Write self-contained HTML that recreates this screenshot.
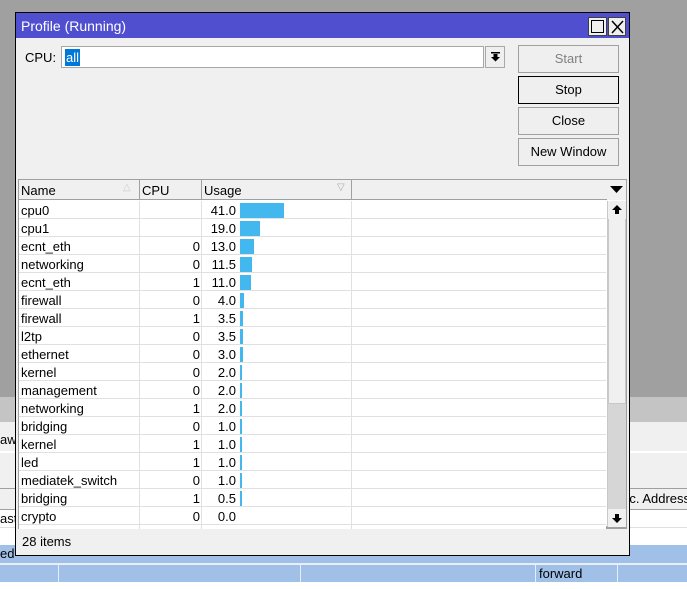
<!DOCTYPE html>
<html><head><style>
*{margin:0;padding:0;box-sizing:border-box}
body{width:687px;height:589px;position:relative;overflow:hidden;background:#fff;font-family:"Liberation Sans",Arial,sans-serif;font-size:13px;color:#000}
.a{position:absolute;white-space:nowrap}
.btn{position:absolute;left:518px;width:101px;height:28px;border:1px solid #a0a0a0;background:#efefef;text-align:center;line-height:26px;font-size:13px}
.r{position:absolute;left:19px;width:587px;height:18px;border-bottom:1px solid #e0e0e0;background:#fff}
.r span{position:absolute;top:2px}
.n{left:2px}.c{left:121px;width:60px;text-align:right}.u{left:183px;width:34px;text-align:right}
.b{position:absolute;left:221px;top:2px;height:15px;background:#42b8ee}
.vl{position:absolute;top:0;height:18px;width:1px;background:#e0e0e0}
</style></head><body>
<div class="a" style="left:0;top:0;width:687px;height:397px;background:#a0a0a0"></div>
<div class="a" style="left:0;top:397px;width:687px;height:25px;background:#c4c4c4"></div>
<div class="a" style="left:0;top:422px;width:687px;height:30px;background:#f0f0f0;border-bottom:1px solid #fff"></div>
<div class="a" style="left:0;top:453px;width:687px;height:35px;background:#f0f0f0"></div>
<div class="a" style="left:0;top:488px;width:687px;height:22px;background:#f0f0f0;border-top:1px solid #a0a0a0;border-bottom:1px solid #a0a0a0"></div>
<div class="a" style="left:625px;top:491px;font-size:13px">rc. Address</div>
<div class="a" style="left:0;top:511px;font-size:13px">ast</div>
<div class="a" style="left:0;top:432px;font-size:13px">aw</div>
<div class="a" style="left:0;top:527px;width:687px;height:1px;background:#e0e0e0"></div>
<div class="a" style="left:0;top:545px;width:687px;height:37px;background:#a0c0e8"></div>
<div class="a" style="left:0;top:563px;width:687px;height:2px;background:#e8eef8"></div>
<div class="a" style="left:58px;top:565px;width:1px;height:17px;background:#e8eef8"></div>
<div class="a" style="left:300px;top:565px;width:1px;height:17px;background:#e8eef8"></div>
<div class="a" style="left:535px;top:565px;width:1px;height:17px;background:#e8eef8"></div>
<div class="a" style="left:617px;top:565px;width:1px;height:17px;background:#e8eef8"></div>
<div class="a" style="left:0;top:546px;font-size:13px">ed</div>
<div class="a" style="left:539px;top:566px;font-size:13px">forward</div>

<div class="a" style="left:15px;top:12px;width:615px;height:544px;background:#f0f0f0;border:1px solid #000"></div>
<div class="a" style="left:16px;top:13px;width:613px;height:25px;background:#4f4fcf;color:#fff;font-size:14px;padding:5px 5px">Profile (Running)</div>
<div class="a" style="left:588px;top:17px;width:19px;height:19px;background:#f0f0f0;border:1px solid #404040"><div class="a" style="left:2px;top:2px;width:13px;height:13px;border:1px solid #000"></div></div>
<div class="a" style="left:608px;top:17px;width:18px;height:19px;background:#f0f0f0;border:1px solid #404040"><svg class="a" style="left:2px;top:2px" width="13" height="14"><path d="M1 1L12 13M12 1L1 13" stroke="#000" stroke-width="1.5"/></svg></div>
<div class="a" style="left:25px;top:50px;font-size:13px">CPU:</div>
<div class="a" style="left:61px;top:46px;width:423px;height:22px;background:#fff;border:1px solid #a8a8a8"><span class="a" style="left:3px;top:2px;background:#0078d7;color:#fff;padding:1px 1px;font-size:13px;line-height:15px">all</span></div>
<div class="a" style="left:485px;top:46px;width:20px;height:22px;background:#efefef;border:1px solid #a8a8a8"><svg class="a" style="left:4px;top:5px" width="11" height="11"><rect x="1" y="0" width="9" height="1.5"/><path d="M3.5 2h4v3h2.5L5.5 9.5 1 5h2.5z"/></svg></div>
<div class="btn" style="top:45px;color:#808080">Start</div>
<div class="btn" style="top:76px;border-color:#000">Stop</div>
<div class="btn" style="top:107px">Close</div>
<div class="btn" style="top:138px">New Window</div>

<div class="a" style="left:18px;top:179px;width:609px;height:350px;border:1px solid #a0a0a0;background:#fff;border-bottom:3px solid #a0a0a0"></div>
<div class="a" style="left:19px;top:180px;width:588px;height:20px;background:#f0f0f0;border-bottom:1px solid #a0a0a0;font-size:13px">
<span class="a" style="left:2px;top:3px">Name</span><span class="a" style="left:104px;top:2px;color:#ccc;font-size:10px">△</span>
<div class="a" style="left:120px;top:0;width:1px;height:20px;background:#a0a0a0"></div>
<span class="a" style="left:123px;top:3px">CPU</span>
<div class="a" style="left:182px;top:0;width:1px;height:20px;background:#a0a0a0"></div>
<span class="a" style="left:185px;top:3px">Usage</span><span class="a" style="left:318px;top:2px;color:#aaa;font-size:10px">▽</span>
<div class="a" style="left:332px;top:0;width:1px;height:20px;background:#a0a0a0"></div>
</div>
<div class="a" style="left:607px;top:180px;width:19px;height:20px;background:#f0f0f0"><svg class="a" style="left:3px;top:6px" width="13" height="8"><path d="M0 0h13L6.5 7z"/></svg></div>
<div class="a" style="left:607px;top:201px;width:19px;height:326px;background:#d6d6d6;border-left:1px solid #c8c8c8"></div>
<div class="a" style="left:608px;top:201px;width:18px;height:203px;background:#f0f0f0;border:1px solid #c8c8c8"></div>
<div class="a" style="left:608px;top:201px;width:18px;height:18px;background:#f0f0f0"><svg class="a" style="left:4px;top:4px" width="10" height="10"><path d="M5 0L10 5H7v4H3V5H0z"/></svg></div>
<div class="a" style="left:608px;top:509px;width:18px;height:18px;background:#f0f0f0"><svg class="a" style="left:4px;top:4px" width="10" height="10"><path d="M5 10L10 5H7V1H3v4H0z"/></svg></div>

<div id="rows"></div>
<div class="a" style="left:19px;top:529px;width:607px;height:25px;background:#f0f0f0;font-size:13px;padding:5px 3px">28 items</div>
<script>
var d=[["cpu0","","41.0",44],["cpu1","","19.0",20],["ecnt_eth","0","13.0",14],["networking","0","11.5",12],["ecnt_eth","1","11.0",11],["firewall","0","4.0",4],["firewall","1","3.5",3],["l2tp","0","3.5",3],["ethernet","0","3.0",3],["kernel","0","2.0",2],["management","0","2.0",2],["networking","1","2.0",2],["bridging","0","1.0",2],["kernel","1","1.0",2],["led","1","1.0",2],["mediatek_switch","0","1.0",2],["bridging","1","0.5",2],["crypto","0","0.0",0],["","","",0]];
var h="";d.forEach(function(r,i){var t=201+i*18;var hh=i==18?8:18;h+='<div class="r" style="top:'+t+'px;height:'+hh+'px"><div class="vl" style="left:120px"></div><div class="vl" style="left:182px"></div><div class="vl" style="left:332px"></div><span class="n">'+r[0]+'</span><span class="c">'+r[1]+'</span><span class="u">'+r[2]+'</span>'+(r[3]?'<div class="b" style="width:'+r[3]+'px"></div>':'')+'</div>';});
document.getElementById("rows").innerHTML=h;
</script>
</body></html>
